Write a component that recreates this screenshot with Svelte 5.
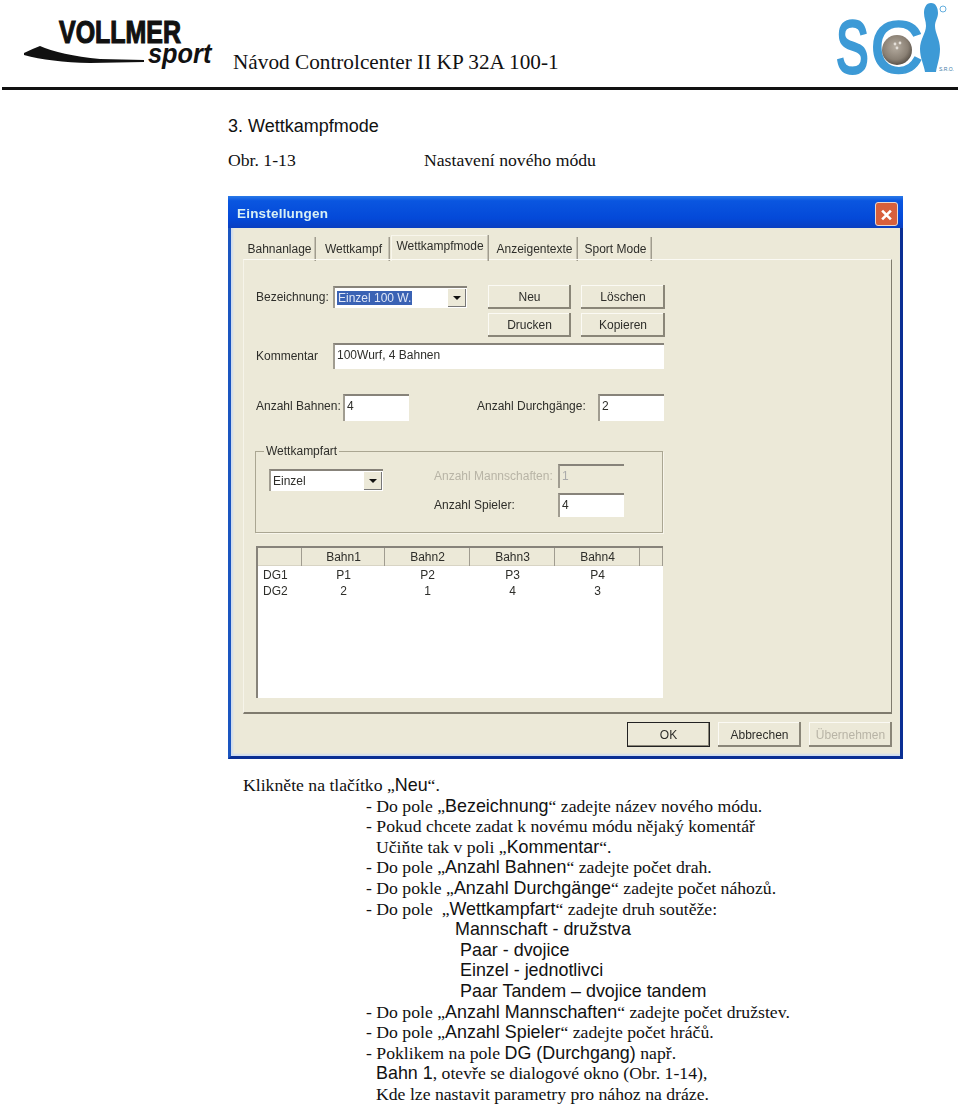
<script lang="ts">
// Manual page: header with two logos, the settings dialog screenshot, then the step list.
const tabs = ["Bahnanlage", "Wettkampf", "Wettkampfmode", "Anzeigentexte", "Sport Mode"];
const columns = ["", "Bahn1", "Bahn2", "Bahn3", "Bahn4", ""];
const rows = [
  ["DG1", "P1", "P2", "P3", "P4", ""],
  ["DG2", "2", "1", "4", "3", ""],
];
</script>

<div class="page">
  <header class="head">
    <svg class="vollmer" viewBox="0 0 190 60" width="190" height="60" aria-label="Vollmer sport">
      <text class="v-name" transform="translate(35 26) scale(.78 1)">VOLLMER</text>
      <text class="v-sport" transform="translate(124 46) scale(.94 1)">sport</text>
      <path d="M0 36 Q8 32 16 29 Q36 38 76 42 L120 43 L120 45 L66 46 Q26 45 0 38 Z" fill="#111" />
    </svg>
    <span class="doc-title">Návod Controlcenter II KP 32A 100-1</span>
    <svg class="sci" viewBox="0 0 124 76" width="124" height="76" aria-label="SCI s.r.o.">
      <text class="s-letter s" transform="translate(1 73) scale(.66 1)">S</text>
      <text class="s-letter c" transform="translate(35 73) scale(1 1)">C</text>
      <defs>
        <radialGradient id="ball" cx="45%" cy="40%" r="60%">
          <stop offset="0" stop-color="#b5aca0" />
          <stop offset=".7" stop-color="#8a8074" />
          <stop offset="1" stop-color="#5b534a" />
        </radialGradient>
      </defs>
      <circle cx="62" cy="50" r="15" fill="url(#ball)" />
      <circle cx="60" cy="44" r="1.4" fill="#e4dfd8" />
      <circle cx="65" cy="43" r="1.4" fill="#e4dfd8" />
      <circle cx="62" cy="48" r="1.4" fill="#e4dfd8" />
      <path
        d="M96 3 C101 3 103 8 103 13 C103 18 100 21 100 26 C100 33 105 39 105 49 C105 58 102 65 101 72 L90 72 C89 65 85 58 85 49 C85 39 91 33 91 26 C91 21 89 18 89 13 C89 8 91 3 96 3 Z"
        fill="#3d9ad6"
      />
      <circle cx="108" cy="9" r="3" fill="none" stroke="#3d9ad6" stroke-width=".8" />
      <text class="s-small" x="104" y="71">S.R.O.</text>
    </svg>
  </header>

  <main class="sheet">
    <h1>3. Wettkampfmode</h1>
    <p class="caption"><span>Obr. 1-13</span><span>Nastavení nového módu</span></p>

    <section class="dialog">
      <div class="titlebar">
        <span>Einstellungen</span>
        <button class="close" aria-label="Close">
          <svg viewBox="0 0 24 24" width="23" height="24">
            <path d="M7 7 L17 17 M17 7 L7 17" stroke="#fff" stroke-width="3" />
          </svg>
        </button>
      </div>

      <nav class="tabs">
        {#each tabs as tab, i}
          <span class="tab" class:active={i === 2}>{tab}</span>
        {/each}
      </nav>

      <div class="panel">
        <div class="top">
          <div class="line">
            <label class="w77" for="bez">Bezeichnung:</label>
            <div class="combo w134" id="bez">
              <span class="sel">Einzel 100 W.</span>
              <i class="arrow"></i>
            </div>
          </div>
          <div class="btns">
            <button class="btn">Neu</button>
            <button class="btn">Löschen</button>
            <button class="btn">Drucken</button>
            <button class="btn">Kopieren</button>
          </div>
        </div>

        <div class="line komm">
          <span class="w77">Kommentar</span>
          <div class="field w331">100Wurf, 4 Bahnen</div>
        </div>

        <div class="line counts">
          <span class="w87">Anzahl Bahnen:</span>
          <div class="field w66">4</div>
          <span class="durch">Anzahl Durchgänge:</span>
          <div class="field w66">2</div>
        </div>

        <fieldset class="group">
          <legend>Wettkampfart</legend>
          <div class="combo w114">
            <span>Einzel</span>
            <i class="arrow"></i>
          </div>
          <div class="group-right">
            <span class="off">Anzahl Mannschaften:</span>
            <div class="field w66 disabled">1</div>
            <span>Anzahl Spieler:</span>
            <div class="field w66">4</div>
          </div>
        </fieldset>

        <div class="grid">
          {#each columns as c}
            <div class="th">{c}</div>
          {/each}
          {#each rows as row}
            {#each row as cell, i}
              <div class="td" class:first={i === 0}>{cell}</div>
            {/each}
          {/each}
        </div>
      </div>

      <div class="footer">
        <button class="btn default">OK</button>
        <button class="btn">Abbrechen</button>
        <button class="btn dim">Übernehmen</button>
      </div>
    </section>
  </main>

  <div class="steps">
    <p class="i0">Klikněte na tlačítko „<b>Neu</b>“.</p>
    <p>- Do pole „<b>Bezeichnung</b>“ zadejte název nového módu.</p>
    <p>- Pokud chcete zadat k novému módu nějaký komentář</p>
    <p class="i1">Učiňte tak v poli „<b>Kommentar</b>“.</p>
    <p>- Do pole „<b>Anzahl Bahnen</b>“ zadejte počet drah.</p>
    <p>- Do pokle „<b>Anzahl Durchgänge</b>“ zadejte počet náhozů.</p>
    <p>- Do pole &nbsp;„<b>Wettkampfart</b>“ zadejte druh soutěže:</p>
    <p class="i2"><b>Mannschaft - družstva</b></p>
    <p class="i3"><b>Paar - dvojice</b></p>
    <p class="i3"><b>Einzel - jednotlivci</b></p>
    <p class="i3"><b>Paar Tandem – dvojice tandem</b></p>
    <p>- Do pole „<b>Anzahl Mannschaften</b>“ zadejte počet družstev.</p>
    <p>- Do pole „<b>Anzahl Spieler</b>“ zadejte počet hráčů.</p>
    <p>- Poklikem na pole <b>DG (Durchgang)</b> např.</p>
    <p class="i1"><b>Bahn 1</b>, otevře se dialogové okno (Obr. 1-14),</p>
    <p class="i1">Kde lze nastavit parametry pro nához na dráze.</p>
  </div>
</div>

<style>
:global(body) {
  background: #fff;
  color: #111;
}
.page {
  width: 960px;
  height: 1105px;
  overflow: hidden;
  font-family: "Liberation Serif", serif;
}

/* header */
.head {
  display: flex;
  align-items: flex-start;
  height: 87px;
  margin: 0 2px;
  border-bottom: 3px solid #111;
}
.vollmer {
  margin: 17px 0 0 22px;
  flex: none;
  overflow: visible;
}
.v-name {
  font: 900 32px "Liberation Sans", sans-serif;
  fill: #111;
  stroke: #111;
  stroke-width: 1.2px;
}
.v-sport {
  font: italic 700 27px "Liberation Sans", sans-serif;
  fill: #111;
}
.doc-title {
  margin: 49px 0 0 19px;
  font-size: 21.25px;
  line-height: 26px;
  white-space: nowrap;
}
.sci {
  margin-left: auto;
  margin-right: -1px;
  flex: none;
  overflow: visible;
}
.s-letter {
  font: 400 74px "Liberation Sans", sans-serif;
  fill: #3d9ad6;
  stroke: #3d9ad6;
}
.s-letter.s {
  stroke-width: 3px;
}
.s-letter.c {
  stroke-width: 1.5px;
}
.s-small {
  font: 5px "Liberation Sans", sans-serif;
  fill: #3d7aa6;
}

/* sheet */
.sheet {
  padding: 26px 0 0 228px;
}
h1 {
  margin: 0;
  font: 400 18px/20px "Liberation Sans", sans-serif;
}
.caption {
  display: flex;
  margin: 15px 0 0;
  font-size: 17.7px;
  line-height: 18px;
}
.caption span:first-child {
  width: 196px;
}

/* dialog */
.dialog {
  width: 675px;
  height: 563px;
  box-sizing: border-box;
  margin-top: 27px;
  background: #ece9d8;
  border-style: solid;
  border-color: #0a46c4 #0a2f94 #0a2f94 #1a55c0;
  border-width: 0 3px 3px 3px;
  box-shadow: inset 3px 0 2px -1px #cfdcf0, inset 0 -3px 2px -1px #cfdcf0;
  font: 12px/14px "Liberation Sans", sans-serif;
  color: #2e2e2a;
  filter: blur(0.5px);
  display: flex;
  flex-direction: column;
}
.titlebar {
  display: flex;
  align-items: center;
  justify-content: space-between;
  box-sizing: border-box;
  height: 32px;
  margin: 0 -3px;
  padding: 4px 5px 0 9px;
  background: linear-gradient(180deg, #2a7ae8 0, #0a56e0 15%, #0449d8 70%, #0a3fc0 100%);
  color: #d8f0f4;
  font-size: 13.5px;
  font-weight: 700;
  letter-spacing: 0.2px;
}
.close {
  width: 23px;
  height: 24px;
  padding: 0;
  border: 1px solid #e8d8d0;
  border-radius: 3px;
  background: #d8603c;
  display: flex;
}
.tabs {
  display: grid;
  grid-template-columns: 74px 74px 100px 88px 74px;
  margin: 9px 0 0 12px;
  height: 22px;
}
.tab {
  text-align: center;
  line-height: 24px;
  white-space: nowrap;
  box-shadow: inset -2px 0 0 -0.5px #a09c8e;
  margin-right: 1px;
}
.tab.active {
  margin: -2px 2px 0 0;
  line-height: 22px;
  box-shadow: inset -2px 0 0 -0.5px #a09c8e, inset 1px 1px 0 #f8f6ec;
  position: relative;
}
.panel {
  width: 649px;
  height: 455px;
  box-sizing: border-box;
  margin-left: 12px;
  padding: 25px 0 0 12px;
  border-top: 1px solid #fbfaf4;
  border-left: 1px solid #f6f4ea;
  border-right: 1px solid #7f7b6e;
  border-bottom: 2px solid #7f7b6e;
}
.top {
  display: flex;
  gap: 21px;
}
.line {
  display: flex;
  align-items: center;
  height: 24px;
  white-space: nowrap;
}
.w77 {
  width: 77px;
  flex: none;
}
.w87 {
  width: 87px;
  flex: none;
}
.w66 {
  width: 66px;
}
.w114 {
  width: 114px;
}
.w134 {
  width: 134px;
}
.w331 {
  width: 331px;
}
.combo,
.field {
  height: 24px;
  box-sizing: border-box;
  display: flex;
  align-items: center;
  padding-left: 2px;
  background: #fff;
  border-top: 2px solid #87837a;
  border-left: 2px solid #a09c90;
  white-space: nowrap;
  flex: none;
}
.combo {
  justify-content: space-between;
  height: 22px;
}
.sel {
  background: #3a62b4;
  color: #dfe6f6;
  padding: 0 1px;
}
.arrow {
  width: 18px;
  height: 18px;
  margin-right: 1px;
  background: #ece9d8;
  box-shadow: inset -1px -1px 0 #777;
  position: relative;
}
.arrow::after {
  content: "";
  position: absolute;
  left: 5px;
  top: 7px;
  border: 4px solid transparent;
  border-top-color: #111;
  border-bottom: 0;
}
.btns {
  display: grid;
  grid-template-columns: 83px 84px;
  grid-auto-rows: 24px;
  column-gap: 10px;
  row-gap: 4px;
}
.btn {
  padding: 0;
  border: 0;
  background: #ece9d8;
  box-shadow: inset -2px -2px 0 #8a8678, inset 1px 1px 0 #fbfaf4;
  font: inherit;
  color: #2e2e2a;
  cursor: default;
}
.komm {
  margin-top: 6px;
  height: 26px;
}
.komm .field {
  height: 26px;
  padding-bottom: 4px;
}
.counts {
  margin-top: 25px;
  height: 27px;
}
.counts .field {
  height: 27px;
  padding-bottom: 6px;
}
.counts span {
  margin-bottom: 4px;
}
.durch {
  margin: 0 13px 0 68px;
  width: 108px;
}
.group {
  display: flex;
  justify-content: space-between;
  width: 408px;
  height: 89px;
  box-sizing: border-box;
  margin: 23px 0 0 -1px;
  padding: 11px 38px 0 13px;
  border: 1px solid #aaa692;
  box-shadow: 1px 1px 0 #f8f6ec;
}
.group legend {
  margin-left: -5px;
  padding: 0 2px;
  line-height: 14px;
}
.group .combo {
  display: flex;
}
.group-right {
  display: grid;
  grid-template-columns: 124px 66px;
  grid-auto-rows: 26px;
  row-gap: 3px;
  align-items: center;
  margin-top: -6px;
  white-space: nowrap;
}
.group-right .field {
  padding-bottom: 3px;
}
.off {
  color: #b8b4a6;
}
.disabled {
  background: #ece9d8;
  color: #aaa;
}
.grid {
  display: grid;
  grid-template-columns: 44px 83px 85px 85px 85px 23px;
  grid-template-rows: 19px repeat(2, 16px);
  align-items: center;
  width: 407px;
  height: 152px;
  box-sizing: border-box;
  margin-top: 13px;
  background: #fff;
  border-top: 2px solid #87837a;
  border-left: 2px solid #87837a;
  text-align: center;
  align-content: start;
}
.th {
  height: 18px;
  line-height: 18px;
  align-self: start;
  background: #ece9d8;
  box-shadow: inset -1px 0 0 #a09c90, inset 0 -1px 0 #d8d4c4;
}
.td.first {
  text-align: left;
  padding-left: 5px;
}
.footer {
  display: flex;
  justify-content: flex-end;
  gap: 8px;
  padding: 8px 8px 0 0;
}
.footer .btn {
  width: 83px;
  height: 25px;
}
.footer .default {
  border: 1px solid #222;
  box-shadow: inset -1px -1px 0 #8a8678;
}
.footer .dim {
  color: #b8b4a6;
}

/* step list */
.steps {
  margin-top: 16px;
  padding-left: 366px;
  font-size: 17.7px;
  line-height: 20.6px;
}
.steps p {
  margin: 0;
  white-space: nowrap;
}
.steps b {
  font: 400 17.9px/1 "Liberation Sans", sans-serif;
}
.steps .i0 {
  margin-left: -123px;
}
.steps .i1 {
  margin-left: 10px;
}
.steps .i2 {
  margin-left: 89px;
}
.steps .i3 {
  margin-left: 94px;
}
</style>
